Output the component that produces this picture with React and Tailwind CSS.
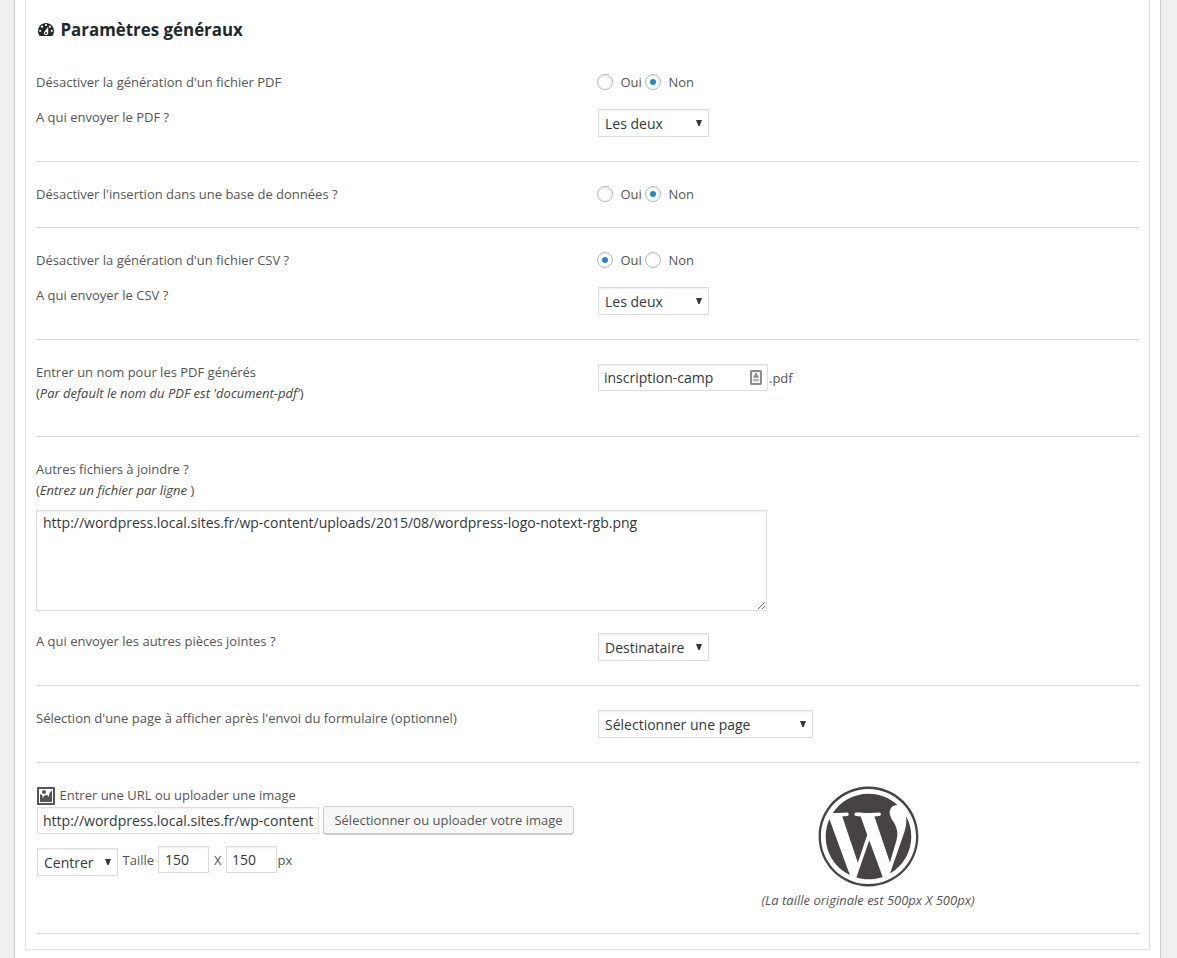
import { FaWordpress } from "react-icons/fa";

const field =
  "border border-[#ddd] bg-white text-[14px] text-[#32373c] shadow-[inset_0_1px_2px_rgba(0,0,0,0.07)] outline-none";

function Section({ className, children }) {
  return (
    <section className={`border-b border-[#ddd] pt-[22px] ${className}`}>
      {children}
    </section>
  );
}

function Row({ label, className = "", children }) {
  return (
    <div className={`flex items-start ${className}`}>
      <div className="w-[562px] shrink-0">{label}</div>
      {children}
    </div>
  );
}

function Select({ value, className }) {
  return (
    <div className={`relative h-7 shrink-0 ${className}`}>
      <select
        defaultValue={value}
        className={`h-7 w-full appearance-none pl-[6px] pt-[2px] leading-[24px] ${field}`}
      >
        <option>{value}</option>
      </select>
      <svg className="absolute right-[7px] top-[11px] h-[6px] w-[6px]" viewBox="0 0 6 6">
        <path d="M0 0h6L3.6 6H2.4z" fill="#32373c" />
      </svg>
    </div>
  );
}

function Radio({ checked }) {
  return (
    <span className="mb-px flex h-4 w-4 shrink-0 items-center justify-center rounded-full border border-[#b4b9be] bg-white shadow-[inset_0_1px_2px_rgba(0,0,0,0.1)]">
      {checked && <span className="h-[6px] w-[6px] rounded-full bg-[#1e8cbe]" />}
    </span>
  );
}

function YesNo({ yes }) {
  return (
    <div className="-ml-px flex h-[21px] items-center">
      <Radio checked={yes} />
      <span className="ml-[7.5px] w-[24.5px]">Oui</span>
      <Radio checked={!yes} />
      <span className="ml-[7.5px]">Non</span>
    </div>
  );
}

function DashboardIcon() {
  return (
    <svg className="h-5 w-5" viewBox="0 0 20 20" fill="currentColor">
      <path d="M3.76 16h12.48c1.1-1.37 1.76-3.11 1.76-5 0-4.42-3.58-8-8-8s-8 3.58-8 8c0 1.89.66 3.63 1.76 5z" />
      <g fill="#fff">
        <circle cx="10" cy="5" r="1.1" />
        <circle cx="6" cy="6.7" r="1.1" />
        <circle cx="14" cy="6.7" r="1.1" />
        <circle cx="4.2" cy="10.8" r="1.1" />
        <circle cx="15.8" cy="10.8" r="1.1" />
        <path d="M8.63 11.55L12.2 6.8V13c0 1.1-.9 2.1-2.1 2.1S8 14.1 8 13c0-.57.24-1.08.63-1.45z" />
      </g>
      <circle cx="10" cy="13" r="1" />
    </svg>
  );
}

function ImageIcon() {
  return (
    <svg className="h-5 w-5" viewBox="0 0 20 20" fill="currentColor">
      <path d="M2.25 1h15.5c.69 0 1.25.56 1.25 1.25v15.5c0 .69-.56 1.25-1.25 1.25H2.25C1.56 19 1 18.44 1 17.75V2.25C1 1.56 1.56 1 2.25 1zM17 17V3H3v14h14zM10 6c0-1.1-.9-2-2-2s-2 .9-2 2 .9 2 2 2 2-.9 2-2zm3 5s0-6 3-6v10c0 .55-.45 1-1 1H5c-.55 0-1-.45-1-1V8c2 0 3 4 3 4s1-3 3-3 3 2 3 2z" />
    </svg>
  );
}

function ContactIcon() {
  return (
    <svg className="absolute right-[6px] top-[6px] h-[15px] w-3" viewBox="0 0 12 15">
      <rect x="1" y="1" width="10" height="13" rx="0.6" fill="#f4f4f4" stroke="#8c8c8c" strokeWidth="2" />
      <path d="M5.1 3h1.8v2L8.4 6v1.8H3.6V6l1.5-1z" fill="#858585" />
      <path d="M3.2 9h5.6v2.2H3.2z" fill="#b0b0b0" />
    </svg>
  );
}

function Hint({ children, end = "" }) {
  return (
    <div className="text-[#444]">
      (<em>{children}</em>{end})
    </div>
  );
}

export default function App() {
  return (
    <div className="h-[958px] w-[1177px] overflow-hidden bg-[#f0f0f0] pl-[14px] pr-4 font-['Open_Sans',sans-serif] text-[13px] leading-[21px] text-[#555]">
      <main className="h-full border-x border-[#ccc] bg-white px-[10px]">
        <div className="h-[950px] border-x border-b border-[#e5e5e5] px-[10px]">
          <h2 className="flex h-[50px] items-start pt-5 text-[16.9px] font-bold leading-5 text-[#23282d]">
            <DashboardIcon />
            <span className="ml-[4.5px]">Paramètres généraux</span>
          </h2>

          <Section className="h-[112px]">
            <Row className="h-[35px]" label="Désactiver la génération d'un fichier PDF">
              <YesNo />
            </Row>
            <Row label="A qui envoyer le PDF ?">
              <Select value="Les deux" className="mt-[2px] w-[111px]" />
            </Row>
          </Section>

          <Section className="h-[66px]">
            <Row label="Désactiver l'insertion dans une base de données ?">
              <YesNo />
            </Row>
          </Section>

          <Section className="h-[112px]">
            <Row className="h-[35px]" label="Désactiver la génération d'un fichier CSV ?">
              <YesNo yes />
            </Row>
            <Row label="A qui envoyer le CSV ?">
              <Select value="Les deux" className="mt-[2px] w-[111px]" />
            </Row>
          </Section>

          <Section className="h-[97px]">
            <Row
              label={
                <>
                  Entrer un nom pour les PDF générés
                  <Hint>Par default le nom du PDF est 'document-pdf'</Hint>
                </>
              }
            >
              <div className="mt-[2px] flex items-start">
                <div className="relative">
                  <input defaultValue="inscription-camp" className={`block h-[27px] w-[170px] px-[5px] ${field}`} />
                  <ContactIcon />
                </div>
                <span className="ml-px mt-1">.pdf</span>
              </div>
            </Row>
          </Section>

          <Section className="h-[249px]">
            <div>Autres fichiers à joindre ?</div>
            <Hint end=" ">Entrez un fichier par ligne</Hint>
            <textarea
              defaultValue="http://wordpress.local.sites.fr/wp-content/uploads/2015/08/wordpress-logo-notext-rgb.png"
              className={`mt-[9px] block h-[101px] w-[731px] resize px-[6px] py-[2px] leading-[20px] ${field}`}
            />
            <Row className="mt-[20px]" label="A qui envoyer les autres pièces jointes ?">
              <Select value="Destinataire" className="mt-[2px] w-[111px]" />
            </Row>
          </Section>

          <Section className="h-[77px]">
            <Row label="Sélection d'une page à afficher après l'envoi du formulaire (optionnel)">
              <Select value="Sélectionner une page" className="mt-[2px] w-[215px]" />
            </Row>
          </Section>

          <Section className="flex h-[171px] items-start">
            <div className="w-[562px]">
              <div className="flex h-[21px] items-center">
                <ImageIcon />
                <span className="ml-[3.5px]">Entrer une URL ou uploader une image</span>
              </div>
              <div className="ml-px flex h-[29px] items-start">
                <input
                  defaultValue="http://wordpress.local.sites.fr/wp-content/uploads/2015/08/wordpress-logo-notext-rgb.png"
                  className={`mt-px h-[27px] w-[282px] px-[5px] ${field}`}
                />
                <button className="ml-1 h-[28px] w-[251px] rounded-[3px] border border-[#ccc] bg-[#f7f7f7] pt-px text-[13px] text-[#555] shadow-[0_1px_0_#ccc]">
                  Sélectionner ou uploader votre image
                </button>
              </div>
              <div className="ml-px mt-[11px] flex items-start">
                <Select value="Centrer" className="mt-[2px] w-[81px]" />
                <span className="ml-[4.5px] mt-[4px] w-[31.5px]">Taille</span>
                <input defaultValue="150" className={`ml-[4px] h-[27px] w-[51px] px-[6px] ${field}`} />
                <span className="ml-[5px] mt-[4px] w-[12px]">X</span>
                <input defaultValue="150" className={`h-[27px] w-[51px] px-[5px] ${field}`} />
                <span className="ml-[0.5px] mt-[4px]">px</span>
              </div>
            </div>
            <div className="flex flex-1 flex-col items-center pr-px">
              <FaWordpress className="-mt-[0.5px] h-[103px] w-[103px] text-[#464342]" />
              <em className="mt-[2.5px]">(La taille originale est 500px X 500px)</em>
            </div>
          </Section>
        </div>
      </main>
    </div>
  );
}
